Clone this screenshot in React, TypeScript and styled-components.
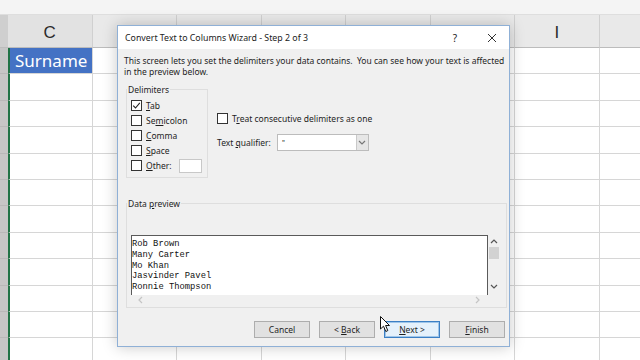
import styled, { createGlobalStyle } from "styled-components";

const GlobalStyle = createGlobalStyle`
  html, body {
    margin: 0;
    padding: 0;
    overflow: hidden;
    background: #ffffff;
  }
`;

const UI_FONT = `"Noto Sans", "Liberation Sans", sans-serif`;

const Screen = styled.div`
  position: relative;
  width: 640px;
  height: 360px;
  overflow: hidden;
  background: #ffffff;
  font-family: ${UI_FONT};
`;

const TopStrip = styled.div`
  height: 15px;
  background: #f4f4f4;
  border-bottom: 1px solid #dedede;
  box-sizing: border-box;
`;

const GridRow = styled.div<{ $header?: boolean }>`
  display: grid;
  grid-template-columns: 8px repeat(8, 84.5px);
  height: ${(p) => (p.$header ? "33px" : "26.4px")};
  box-sizing: border-box;
`;

const RowHead = styled.div<{ $header?: boolean }>`
  background: ${(p) => (p.$header ? "#cfcfcf" : "#c6c6c6")};
  border-bottom: 1px solid ${(p) => (p.$header ? "#bdbdbd" : "#b8b8b8")};
  box-sizing: border-box;
`;

const ColHead = styled.div<{ $selected?: boolean }>`
  display: flex;
  align-items: center;
  justify-content: center;
  background: ${(p) => (p.$selected ? "#e2e2e2" : "#e9e9e9")};
  border-right: 1px solid #d0d0d0;
  border-bottom: 1px solid #bcbcbc;
  box-sizing: border-box;
  font-family: "Liberation Sans", Arial, sans-serif;
  font-size: 17px;
  color: #2b2b2b;
  padding-top: 3px;
`;

const Cell = styled.div<{ $selectedCol?: boolean; $fill?: boolean }>`
  display: flex;
  align-items: center;
  padding-left: 5px;
  background: ${(p) => (p.$fill ? "#4472c4" : "#ffffff")};
  color: #ffffff;
  font-size: 17px;
  border-right: 1px solid #d6d6d6;
  border-bottom: 1px solid #d6d6d6;
  border-left: ${(p) => (p.$selectedCol ? "2px solid #217346" : "none")};
  box-sizing: border-box;
`;

const Dialog = styled.div`
  position: absolute;
  left: 117px;
  top: 25px;
  width: 393px;
  height: 322px;
  box-sizing: border-box;
  background: #f0f0f0;
  border: 1px solid #8fb0d6;
  box-shadow: 0 0 14px rgba(0, 0, 0, 0.22);
  color: #1e1e1e;
  display: flex;
  flex-direction: column;
`;

const TitleBar = styled.div`
  height: 23px;
  background: #ffffff;
  display: flex;
  align-items: center;
  padding: 0 6px 0 7px;
  font-size: 8.8px;
  color: #222;
`;

const TitleText = styled.div`
  flex: 1;
`;

const TitleButton = styled.div<{ $wide?: boolean }>`
  width: ${(p) => (p.$wide ? "22px" : "20px")};
  margin-left: ${(p) => (p.$wide ? "16px" : "0")};
  display: flex;
  justify-content: center;
  font-size: 10px;
`;

const Body = styled.div`
  flex: 1;
  display: flex;
  flex-direction: column;
  padding: 6px 4px 0 6px;
  font-size: 8.5px;
`;

const Intro = styled.p`
  margin: 0;
  line-height: 11px;
`;

const OptionsRow = styled.div`
  display: flex;
  margin-top: 7px;
  margin-left: 2px;
`;

const Group = styled.fieldset<{ $width: number }>`
  width: ${(p) => p.$width}px;
  margin: 0;
  padding: 3px 0 4px 4px;
  border: 1px solid #dedede;
  box-sizing: border-box;
  min-width: 0;
`;

const Legend = styled.legend`
  padding: 0 1px;
  margin-left: -4px;
  line-height: 11px;
  font-size: 8.5px;
`;

const CheckRow = styled.div<{ $h?: number }>`
  display: flex;
  align-items: center;
  height: ${(p) => p.$h ?? 15}px;
  gap: 4px;
`;

const Box = styled.div`
  width: 9px;
  height: 9px;
  border: 1px solid #333;
  background: #fff;
  display: flex;
  align-items: center;
  justify-content: center;
`;

const SmallInput = styled.div`
  width: 23px;
  height: 14px;
  margin-left: 3px;
  background: #fff;
  border: 1px solid #c8c8c8;
  box-sizing: border-box;
`;

const SideOptions = styled.div`
  display: flex;
  flex-direction: column;
  margin-left: 9px;
  padding-top: 28px;
  gap: 9px;
`;

const QualifierRow = styled.div`
  display: flex;
  align-items: center;
  gap: 6px;
`;

const Combo = styled.div`
  width: 92px;
  height: 17px;
  background: #fff;
  border: 1px solid #bcbcbc;
  box-sizing: border-box;
  display: flex;
  align-items: center;
  font-size: 7px;
`;

const ComboValue = styled.div`
  flex: 1;
  padding-left: 4px;
`;

const ComboArrow = styled.div`
  width: 11px;
  height: 100%;
  background: #e6e6e6;
  border-left: 1px solid #c9c9c9;
  display: flex;
  align-items: center;
  justify-content: center;
`;

const PreviewGroup = styled(Group)`
  margin-top: 20px;
  margin-left: 2px;
  padding: 26px 6px 2px 4px;
`;

const PreviewFrame = styled.div`
  display: flex;
  height: 60px;
`;

const PreviewText = styled.pre`
  flex: 1;
  margin: 0;
  padding: 3px 0 0 0;
  background: #fff;
  border: 1px solid #5a5a5a;
  border-bottom: none;
  font-family: "Liberation Mono", "DejaVu Sans Mono", monospace;
  font-size: 8.8px;
  line-height: 10.8px;
  color: #111;
  overflow: hidden;
`;

const VScroll = styled.div`
  width: 12px;
  display: flex;
  flex-direction: column;
  align-items: center;
  justify-content: space-between;
  padding: 3px 0 4px;
  box-sizing: border-box;
`;

const Thumb = styled.div`
  width: 10px;
  height: 12px;
  background: #d2d2d2;
  margin-top: 1px;
  margin-bottom: auto;
`;

const HScroll = styled.div`
  height: 10px;
  margin-right: 12px;
  display: flex;
  justify-content: space-between;
  align-items: center;
  padding: 0 6px;
`;

const ButtonRow = styled.div`
  display: flex;
  justify-content: flex-end;
  gap: 9px;
  margin-top: 13px;
`;

const Button = styled.div<{ $default?: boolean }>`
  width: 56px;
  height: 17px;
  box-sizing: border-box;
  display: flex;
  align-items: center;
  justify-content: center;
  background: ${(p) => (p.$default ? "#e5f1fb" : "#e1e1e1")};
  border: 1px solid ${(p) => (p.$default ? "#3c7fc4" : "#adadad")};
  box-shadow: ${(p) => (p.$default ? "inset 0 0 0 1px #9fc6ea" : "none")};
  font-size: 8.5px;
`;

const Pointer = styled.svg`
  position: absolute;
  left: 380px;
  top: 316px;
`;

const Chevron = ({ dir, color = "#555" }: { dir: "up" | "down" | "left" | "right"; color?: string }) => {
  const paths = {
    up: "M1 5 L4 2 L7 5",
    down: "M1 2 L4 5 L7 2",
    left: "M5 1 L2 4 L5 7",
    right: "M2 1 L5 4 L2 7",
  };
  return (
    <svg width="8" height="8" viewBox="0 0 8 8">
      <path d={paths[dir]} fill="none" stroke={color} strokeWidth="1.2" />
    </svg>
  );
};

const Check = ({ checked }: { checked?: boolean }) => (
  <Box>
    {checked && (
      <svg width="9" height="9" viewBox="0 0 9 9">
        <path d="M1.2 4.6 L3.5 7 L7.8 1.8" fill="none" stroke="#222" strokeWidth="1.1" />
      </svg>
    )}
  </Box>
);

// headers D–H sit under the dialog, so only the visible ones carry a letter
const columns = ["C", "", "", "", "", "", "I", ""];
const rows = Array.from({ length: 12 }, (_, i) => i);

const names = ["Rob Brown", "Many Carter", "Mo Khan", "Jasvinder Pavel", "Ronnie Thompson"];

const App = () => {
  return (
    <Screen>
      <GlobalStyle />
      <TopStrip />
      <GridRow $header>
        <RowHead $header />
        {columns.map((c, i) => (
          <ColHead key={i} $selected={i === 0}>
            {c}
          </ColHead>
        ))}
      </GridRow>
      {rows.map((r) => (
        <GridRow key={r}>
          <RowHead />
          {columns.map((_, i) => (
            <Cell key={i} $selectedCol={i === 0} $fill={i === 0 && r === 0}>
              {i === 0 && r === 0 ? "Surname" : ""}
            </Cell>
          ))}
        </GridRow>
      ))}

      <Dialog>
        <TitleBar>
          <TitleText>Convert Text to Columns Wizard - Step 2 of 3</TitleText>
          <TitleButton>?</TitleButton>
          <TitleButton $wide>
            <svg width="10" height="10" viewBox="0 0 10 10">
              <path d="M1 1 L9 9 M9 1 L1 9" stroke="#333" strokeWidth="1" />
            </svg>
          </TitleButton>
        </TitleBar>
        <Body>
          <Intro>
            This screen lets you set the delimiters your data contains.&nbsp; You can see how your text is affected
            <br />
            in the preview below.
          </Intro>

          <OptionsRow>
            <Group $width={82}>
              <Legend>Delimiters</Legend>
              <CheckRow>
                <Check checked />
                <span>
                  <u>T</u>ab
                </span>
              </CheckRow>
              <CheckRow>
                <Check />
                <span>
                  Se<u>m</u>icolon
                </span>
              </CheckRow>
              <CheckRow>
                <Check />
                <span>
                  <u>C</u>omma
                </span>
              </CheckRow>
              <CheckRow>
                <Check />
                <span>
                  <u>S</u>pace
                </span>
              </CheckRow>
              <CheckRow>
                <Check />
                <span>
                  <u>O</u>ther:
                </span>
                <SmallInput />
              </CheckRow>
            </Group>

            <SideOptions>
              <CheckRow $h={13}>
                <Check />
                <span>
                  T<u>r</u>eat consecutive delimiters as one
                </span>
              </CheckRow>
              <QualifierRow>
                <span>
                  Text <u>q</u>ualifier:
                </span>
                <Combo>
                  <ComboValue>"</ComboValue>
                  <ComboArrow>
                    <Chevron dir="down" color="#777" />
                  </ComboArrow>
                </Combo>
              </QualifierRow>
            </SideOptions>
          </OptionsRow>

          <PreviewGroup $width={381}>
            <Legend>
              Data <u>p</u>review
            </Legend>
            <PreviewFrame>
              <PreviewText>{names.join("\n")}</PreviewText>
              <VScroll>
                <Chevron dir="up" />
                <Thumb />
                <Chevron dir="down" />
              </VScroll>
            </PreviewFrame>
            <HScroll>
              <Chevron dir="left" color="#c4c4c4" />
              <Chevron dir="right" color="#c4c4c4" />
            </HScroll>
          </PreviewGroup>

          <ButtonRow>
            <Button>Cancel</Button>
            <Button>
              &lt;&nbsp;<u>B</u>ack
            </Button>
            <Button $default>
              <span>
                <u>N</u>ext &gt;
              </span>
            </Button>
            <Button>
              <u>F</u>inish
            </Button>
          </ButtonRow>
        </Body>
      </Dialog>

      <Pointer width="11" height="17" viewBox="0 0 11 17">
        <path d="M0.5 0.5 L0.5 13 L3.5 10.2 L5.8 15.5 L7.8 14.6 L5.6 9.5 L9.5 9.5 Z" fill="#fff" stroke="#111" strokeWidth="1" />
      </Pointer>
    </Screen>
  );
};

export default App;
